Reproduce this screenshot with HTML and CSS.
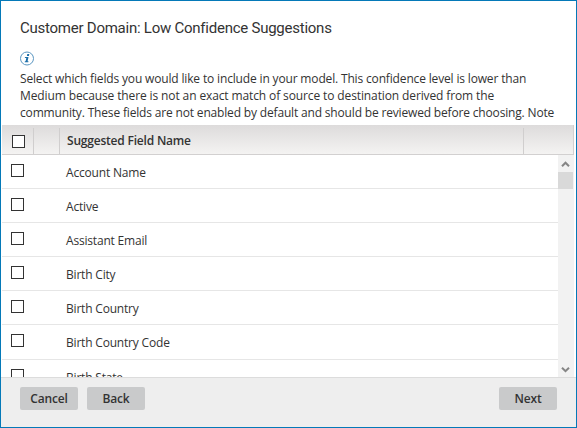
FILE: index.html
```html
<!DOCTYPE html>
<html lang="en">
<head>
<meta charset="utf-8">
<title>Customer Domain</title>
<link rel="stylesheet" href="styles.css">
</head>
<body>
<main class="dialog">
  <header class="intro">
    <h1 class="title"><span>Customer Domain: Low Confidence Suggestions</span></h1>
    <svg class="info" width="15" height="15" viewBox="0 0 15 15">
      <circle cx="7" cy="7.5" r="6.5" fill="#fff" stroke="#5b97c2" stroke-width="1"/>
      <path d="M7.3 3h2l-.4 1.9H6.9zM5 6h3.5L7.6 10.2h.9l-.2 1.1H4.7l.2-1.1h.7L6.3 7H4.8z" fill="#1d6fa9"/>
    </svg>
    <p class="text"><span class="line-first">Select which fields you would like to include in your model. This confidence level is lower than</span><br><span class="line-mid">Medium because there is not an exact match of source to destination derived from the</span><br><span>community. These fields are not enabled by default and should be reviewed before choosing. Note</span></p>
  </header>
  <div class="head">
    <div class="head-check"><i class="box"></i></div>
    <div class="head-gap"></div>
    <div class="head-name"><span>Suggested Field Name</span></div>
    <div class="head-end"></div>
  </div>
  <section class="body">
    <div class="rows">
      <div class="row"><i class="box"></i><span>Account Name</span></div>
      <div class="row"><i class="box"></i><span>Active</span></div>
      <div class="row"><i class="box"></i><span>Assistant Email</span></div>
      <div class="row"><i class="box"></i><span>Birth City</span></div>
      <div class="row"><i class="box"></i><span>Birth Country</span></div>
      <div class="row tall"><i class="box"></i><span>Birth Country Code</span></div>
      <div class="row"><i class="box"></i><span>Birth State</span></div>
    </div>
    <div class="scroll">
      <svg class="arrow" width="15" height="17" viewBox="0 0 15 17"><path d="M4 11.2 7.5 7.7 11 11.2" fill="none" stroke="#858585" stroke-width="2"/></svg>
      <div class="thumb"></div>
      <svg class="arrow down" width="15" height="17" viewBox="0 0 15 17"><path d="M4 7.7 7.5 11.2 11 7.7" fill="none" stroke="#858585" stroke-width="2"/></svg>
    </div>
  </section>
  <footer class="foot">
    <button class="btn">Cancel</button>
    <button class="btn">Back</button>
    <button class="btn next">Next</button>
  </footer>
</main>
</body>
</html>
```
FILE: styles.css
```css
* { box-sizing: border-box; }
body { margin: 0; }
.dialog {
  width: 577px; height: 428px; display: flex; flex-direction: column;
  border: 1px solid #0479b8; background: #fff;
  font: 12px/17px "Open Sans", sans-serif; color: #333; overflow: hidden;
}
.intro { height: 124px; padding: 16px 0 0 19px; overflow: hidden; flex: none; }
.title { margin: 0; font: 400 15px/22px Roboto, sans-serif; letter-spacing: -0.245px; white-space: nowrap; }
.info { display: block; margin-top: 12px; }
.text { margin: 4px 0 0; white-space: nowrap; letter-spacing: -0.168px; }
.line-first { letter-spacing: -0.158px; }
.line-mid { letter-spacing: -0.118px; }
.head {
  display: flex; height: 30px; flex: none; margin: 0 2px 0 1px;
  background: linear-gradient(#dddbdb, #f4f3f2); border-bottom: 1px solid #d2d0d0;
  border-right: 1px solid #d2d0d0;
  font-weight: 600; line-height: 17px; letter-spacing: -0.2px;
}
.head > div { border-right: 1px solid #d0cece; margin-top: 3px; }
.head > .head-end { flex: 1; border: 0; }
.head-check { width: 32px; padding: 7px 0 0 10px; }
.head-gap { width: 26px; }
.head-name { width: 464px; padding: 4px 0 0 7px; }
.box { display: block; width: 13px; height: 13px; border: 1px solid #333; background: #fff; flex: none; }
.body { display: flex; height: 222px; flex: none; margin: 0 2px 0 1px; overflow: hidden; letter-spacing: -0.19px; }
.rows { flex: 1; }
.row { display: flex; height: 34px; padding: 9px 0 0 9px; border-bottom: 1px solid #e6e6e6; }
.row.tall { height: 35px; }
.row span { margin-left: 42px; }
.scroll { width: 16px; background: #f2f2f2; display: flex; flex-direction: column; }
.thumb { height: 17px; width: 15px; background: #d9d9d9; }
.down { margin-top: auto; }
.foot { flex: 1; display: flex; gap: 9px; padding: 9px 19px 0; background: #eee; border-top: 1px solid #dcdcdc; }
.btn {
  width: 58px; height: 23px; padding: 0; border: 0; border-radius: 2px; background: #c9cacb;
  font: 600 12px/23px "Open Sans", sans-serif; letter-spacing: -0.15px; color: #333;
}
.next { margin-left: auto; }
```
